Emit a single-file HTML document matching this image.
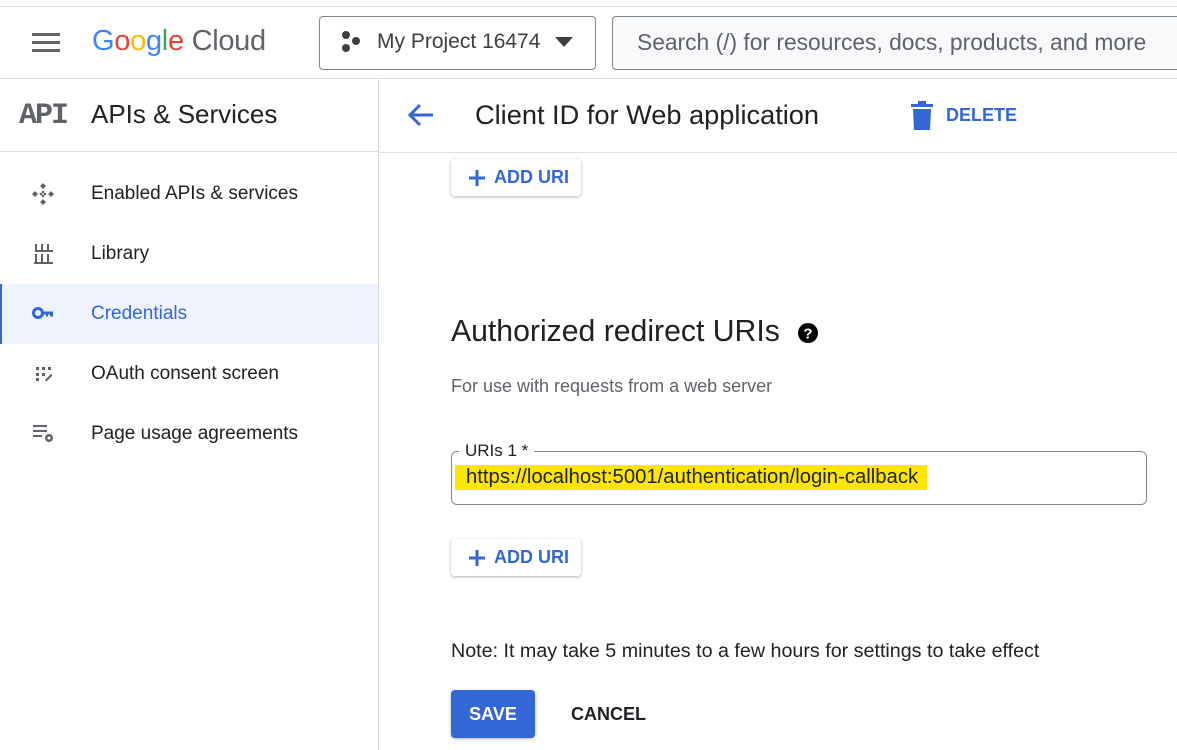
<!DOCTYPE html>
<html><head><meta charset="utf-8"><style>
*{box-sizing:border-box;margin:0;padding:0}
body{width:1177px;height:750px;overflow:hidden;background:#fff;font-family:"Liberation Sans",Arial,sans-serif;color:#202124;position:relative}
.abs{position:absolute;white-space:nowrap}
.btn{position:absolute;background:#fff;border-radius:4px;box-shadow:0 1px 3px rgba(0,0,0,.3);color:#3367d6;font-weight:bold;font-size:18px;display:flex;align-items:center}
</style></head><body>
<div class="abs" style="left:0;top:6px;width:1177px;height:1px;background:#e0e0e0"></div>
<div class="abs" style="left:32px;top:33px;width:28px;height:3px;background:#5f6368"></div>
<div class="abs" style="left:32px;top:41px;width:28px;height:3px;background:#5f6368"></div>
<div class="abs" style="left:32px;top:49px;width:28px;height:3px;background:#5f6368"></div>
<div class="abs" style="left:92px;top:25px;font-size:29px;letter-spacing:-0.3px"><span style="color:#4285f4">G</span><span style="color:#ea4335">o</span><span style="color:#fbbc05">o</span><span style="color:#4285f4">g</span><span style="color:#34a853">l</span><span style="color:#ea4335">e</span> <span style="color:#5f6368">Cloud</span></div>
<div class="abs" style="left:319px;top:16px;width:277px;height:54px;border:1px solid #80868b;border-radius:4px"></div>
<svg class="abs" style="left:340px;top:30px" width="24" height="24" viewBox="0 0 24 24"><circle cx="6" cy="5" r="4" fill="#3c4043"/><circle cx="16" cy="11" r="4" fill="#3c4043"/><circle cx="6" cy="18" r="4" fill="#3c4043"/></svg>
<div class="abs" style="left:377px;top:30px;font-size:21px;color:#3c4043">My Project 16474</div>
<svg class="abs" style="left:555px;top:37px" width="20" height="12"><path d="M0 0h18L9 10z" fill="#3c4043"/></svg>
<div class="abs" style="left:612px;top:16px;width:580px;height:54px;border:1px solid #80868b;border-radius:4px;background:#f8f9fa"></div>
<div class="abs" style="left:637px;top:29px;font-size:22.8px;color:#5f6368">Search (/) for resources, docs, products, and more</div>
<div class="abs" style="left:0;top:78px;width:1177px;height:1px;background:#dadce0"></div>
<div class="abs" style="left:378px;top:79px;width:1px;height:671px;background:#dadce0"></div>
<div class="abs" style="left:19px;top:99px;font-family:'Liberation Mono',monospace;font-weight:bold;font-size:30px;color:#5f6368;letter-spacing:-2px">API</div>
<div class="abs" style="left:91px;top:99px;font-size:26px;color:#202124">APIs &amp; Services</div>
<div class="abs" style="left:0;top:151px;width:378px;height:1px;background:#dadce0"></div>
<svg class="abs" style="left:31px;top:182px" width="24" height="24" viewBox="0 0 24 24" fill="#5f6368"><path d="M12 1l3 3-3 3-3-3zM12 17l3 3-3 3-3-3zM1 12l3-3 3 3-3 3zM17 12l3-3 3 3-3 3z"/><circle cx="12" cy="10" r="1.3"/><circle cx="12" cy="14" r="1.3"/><circle cx="10" cy="12" r="1.3"/><circle cx="14" cy="12" r="1.3"/></svg>
<div class="abs" style="left:91px;top:183px;font-size:19px">Enabled APIs &amp; services</div>
<svg class="abs" style="left:34px;top:243px" width="20" height="22" viewBox="0 0 20 22" fill="#5f6368"><rect x="1" y="1" width="2" height="6"/><rect x="7" y="1" width="2" height="6"/><rect x="13" y="1" width="2" height="6"/><rect x="1" y="7" width="18" height="2"/><rect x="1" y="11" width="2" height="8"/><rect x="7" y="11" width="2" height="8"/><rect x="13" y="11" width="2" height="8"/><rect x="0" y="19" width="19" height="2"/></svg>
<div class="abs" style="left:91px;top:243px;font-size:19px">Library</div>
<div class="abs" style="left:0;top:284px;width:378px;height:60px;background:#eef3fd;border-left:2px solid #3367d6"></div>
<svg class="abs" style="left:32px;top:305px" width="24" height="16" viewBox="0 0 24 16"><circle cx="6" cy="8" r="4.5" fill="none" stroke="#3367d6" stroke-width="3"/><path d="M10 6.5h11v5h-3v-2h-2v2h-2v-2h-4z" fill="#3367d6"/></svg>
<div class="abs" style="left:91px;top:303px;font-size:19px;color:#3367d6">Credentials</div>
<svg class="abs" style="left:34px;top:366px" width="20" height="16" viewBox="0 0 20 16" fill="#5f6368"><rect x="2" y="1" width="3" height="3"/><rect x="8" y="1" width="3" height="3"/><rect x="14" y="1" width="3" height="3"/><rect x="2" y="7" width="3" height="3"/><rect x="8" y="7" width="3" height="3"/><rect x="2" y="12" width="3" height="3"/><path d="M11 14l6-6 1.5 1.5-6 6z"/></svg>
<div class="abs" style="left:91px;top:363px;font-size:19px">OAuth consent screen</div>
<svg class="abs" style="left:32px;top:424px" width="26" height="20" viewBox="0 0 26 20" fill="#5f6368"><rect x="1" y="1" width="14" height="2"/><rect x="1" y="6" width="14" height="2"/><rect x="1" y="11" width="9" height="2"/><circle cx="17" cy="14" r="4"/><circle cx="17" cy="14" r="1.5" fill="#fff"/></svg>
<div class="abs" style="left:91px;top:423px;font-size:19px">Page usage agreements</div>
<svg class="abs" style="left:407px;top:102px" width="28" height="26" viewBox="0 0 28 26"><path d="M26 13H4M13 3L3 13l10 10" fill="none" stroke="#3367d6" stroke-width="3"/></svg>
<div class="abs" style="left:475px;top:99px;font-size:27.2px">Client ID for Web application</div>
<svg class="abs" style="left:910px;top:101px" width="24" height="30" viewBox="0 0 24 30" fill="#3367d6"><rect x="1" y="3" width="22" height="3"/><rect x="8" y="0" width="8" height="4"/><path d="M3 8h18l-1 21H4z"/></svg>
<div class="abs" style="left:946px;top:105px;font-size:18px;font-weight:bold;color:#3367d6">DELETE</div>
<div class="abs" style="left:379px;top:152px;width:798px;height:1px;background:#e0e0e0"></div>
<div class="btn" style="left:451px;top:159px;width:130px;height:37px"><svg style="margin:0 8px 0 17px" width="18" height="18"><path d="M9 1v16M1 9h16" stroke="#3367d6" stroke-width="3"/></svg>ADD URI</div>
<div class="abs" style="left:451px;top:315px;font-size:30.2px">Authorized redirect URIs</div>
<svg class="abs" style="left:797px;top:322px" width="22" height="22" viewBox="0 0 22 22"><circle cx="11" cy="11" r="10" fill="#000"/><text x="11" y="16.5" text-anchor="middle" font-family="Liberation Sans" font-weight="bold" font-size="15" fill="#fff">?</text></svg>
<div class="abs" style="left:451px;top:376px;font-size:18px;color:#5f6368">For use with requests from a web server</div>
<div class="abs" style="left:451px;top:451px;width:696px;height:54px;border:1px solid #80868b;border-radius:6px"></div>
<div class="abs" style="left:459px;top:441px;background:#fff;padding:0 6px;font-size:17px;color:#202124">URIs 1 *</div>
<div class="abs" style="left:455px;top:465px;width:472px;height:25px;background:#ffe600"></div>
<div class="abs" style="left:466px;top:466px;font-size:20.3px">https://localhost:5001/authentication/login-callback</div>
<div class="btn" style="left:451px;top:539px;width:130px;height:37px"><svg style="margin:0 8px 0 17px" width="18" height="18"><path d="M9 1v16M1 9h16" stroke="#3367d6" stroke-width="3"/></svg>ADD URI</div>
<div class="abs" style="left:451px;top:640px;font-size:19.7px">Note: It may take 5 minutes to a few hours for settings to take effect</div>
<div class="abs" style="left:451px;top:690px;width:84px;height:48px;background:#3367d6;border-radius:4px;box-shadow:0 1px 3px rgba(0,0,0,.3);color:#fff;font-weight:bold;font-size:18px;display:flex;align-items:center;justify-content:center">SAVE</div>
<div class="abs" style="left:571px;top:704px;font-weight:bold;font-size:18px;color:#202124">CANCEL</div>
</body></html>
